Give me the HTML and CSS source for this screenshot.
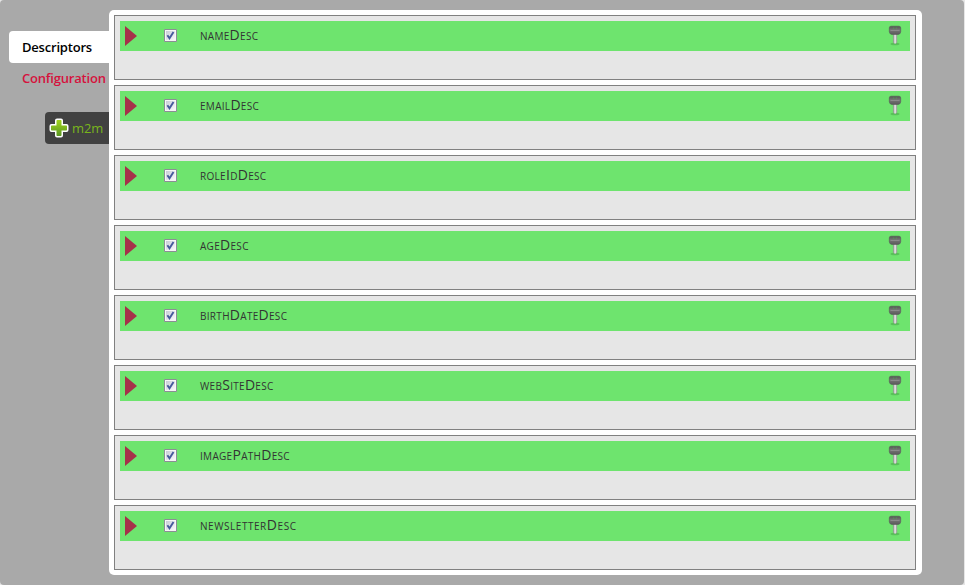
FILE: index.html
```html
<!DOCTYPE html>
<html lang="en">
<head>
<meta charset="utf-8">
<title>Descriptors</title>
<link rel="stylesheet" href="styles.css">
</head>
<body>
<svg class="defs" width="0" height="0" aria-hidden="true">
  <defs>
    <linearGradient id="plusFill" x1="0" y1="0" x2="0" y2="1"><stop offset="0" stop-color="#a2d51c"/><stop offset="1" stop-color="#5a9622"/></linearGradient>
    <linearGradient id="boxFill" x1="0" y1="0" x2="1" y2="1"><stop offset="0" stop-color="#c6ccd6"/><stop offset="1" stop-color="#fafafa"/></linearGradient>
    <linearGradient id="keyFill" x1="0" y1="0" x2="0" y2="1"><stop offset="0" stop-color="#555"/><stop offset=".45" stop-color="#757575"/><stop offset="1" stop-color="#5b5b5b"/></linearGradient>
    <linearGradient id="shaftFill"><stop offset="0" stop-color="#8b8b8b"/><stop offset=".5" stop-color="#eee"/><stop offset="1" stop-color="#999"/></linearGradient>
    <symbol id="check" viewBox="0 0 13 13"><path d="M.5.5h12v12H.5z" fill="#f6f6f6" stroke="#8b8f94"/><path d="M2 2h9v9H2z" fill="url(#boxFill)"/><path d="M3.4 6.3 5.5 9.3 9.5 3" fill="none" stroke="#455a9c" stroke-width="1.9"/></symbol>
    <symbol id="key" viewBox="0 0 14 22"><ellipse cx="7" cy="19" rx="4.5" ry="1.3" fill="#4ba94d" opacity=".6"/><path d="M5.3 8h3.6v9.5L7.1 19l-1.8-1.5z" fill="url(#shaftFill)" stroke="#969c96" stroke-width=".4"/><path d="M3 1.2h8q1.7 0 1.7 1.7v3.6Q12.7 9 10.4 9.4H3.6Q1.3 9 1.3 6.500V2.9Q1.300 1.200 3 1.200z" fill="url(#keyFill)" stroke="#555" stroke-width=".6"/><path d="M5 3.200h1.300M7.800 3.200h1.300" stroke="#559a56"/><path d="M2.500 5.500h9" stroke="#8a8a8a"/></symbol>
  </defs>
</svg>
<div class="app">
  <nav class="side">
    <a class="tab active"><span>Descriptors</span></a>
    <a class="tab"><span class="config">Configuration</span></a>
    <a class="add"><svg width="20" height="20" viewBox="0 0 20 20"><path d="M8 .5h4q2 0 2 2V6h3.500q2 0 2 2v4q0 2-2 2H14v3.500q0 2-2 2H8q-2 0-2-2V14H2.500q-2 0-2-2V8q0-2 2-2H6V2.500q0-2 2-2z" fill="#fff"/><path d="M8.200 2h3.600q.7 0 .7.700v4.800h4.800q.7 0 .7.700v3.600q0 .7-.7.700h-4.800v4.800q0 .7-.7.700H8.200q-.7 0-.7-.7v-4.800H2.700q-.7 0-.7-.7V8.200q0-.7.7-.7h4.800V2.700q0-.7.700-.7z" fill="url(#plusFill)"/></svg><span>m2m</span></a>
  </nav>
  <main class="panel">
    <section class="card"><div class="bar"><i class="arrow"></i><svg class="check"><use href="#check"/></svg><span class="name">nameDesc</span><svg class="key"><use href="#key"/></svg></div></section>
    <section class="card"><div class="bar"><i class="arrow"></i><svg class="check"><use href="#check"/></svg><span class="name">emailDesc</span><svg class="key"><use href="#key"/></svg></div></section>
    <section class="card"><div class="bar"><i class="arrow"></i><svg class="check"><use href="#check"/></svg><span class="name">roleIdDesc</span></div></section>
    <section class="card"><div class="bar"><i class="arrow"></i><svg class="check"><use href="#check"/></svg><span class="name">ageDesc</span><svg class="key"><use href="#key"/></svg></div></section>
    <section class="card"><div class="bar"><i class="arrow"></i><svg class="check"><use href="#check"/></svg><span class="name">birthDateDesc</span><svg class="key"><use href="#key"/></svg></div></section>
    <section class="card"><div class="bar"><i class="arrow"></i><svg class="check"><use href="#check"/></svg><span class="name">webSiteDesc</span><svg class="key"><use href="#key"/></svg></div></section>
    <section class="card"><div class="bar"><i class="arrow"></i><svg class="check"><use href="#check"/></svg><span class="name">imagePathDesc</span><svg class="key"><use href="#key"/></svg></div></section>
    <section class="card"><div class="bar"><i class="arrow"></i><svg class="check"><use href="#check"/></svg><span class="name long">newsletterDesc</span><svg class="key"><use href="#key"/></svg></div></section>
  </main>
</div>
</body>
</html>
```
FILE: styles.css
```css
* { box-sizing: border-box; }
body { margin: 0; background: #e6e6e6; font-family: "Trebuchet MS", "Open Sans", sans-serif; overflow: hidden; }
.defs { position: absolute; }
.app { display: flex; align-items: flex-start; width: 964px; height: 585px; padding-top: 10px; background: #a9a9a9; border-radius: 4px; }
.side { display: flex; flex-direction: column; width: 109px; padding: 21px 0 0 9px; }
.tab { display: flex; align-items: center; height: 32px; padding-left: 13px; font-size: 13px; font-weight: 600; letter-spacing: -.2px; white-space: nowrap; color: #d5123d; border-radius: 4px 0 0 4px; }
.tab.active { background: #fff; color: #000; }
.config { position: relative; top: -1px; }
.add { display: flex; align-items: center; width: 64px; height: 32px; margin: 17px 0 0 36px; padding-left: 4px; gap: 3px; border-radius: 4px 0 0 4px; background: #414141; color: #79b51c; font-size: 13px; font-weight: 500; letter-spacing: -.1px; }
.panel { display: flex; flex-direction: column; gap: 5px; width: 813px; height: 565px; padding: 5px 6px 5px 5px; background: #fff; border-radius: 5px; }
.card { height: 65px; padding: 5px; background: #e6e6e6; border: 1px solid #808080; }
.bar { display: flex; align-items: center; height: 30px; padding: 0 8px 0 5px; background: #6ee46e; }
.arrow { width: 12px; height: 20px; background: #a6314a; clip-path: polygon(0 0, 100% 50%, 0 100%); }
.check { width: 13px; height: 13px; margin: 0 23px 1px 27px; }
.name { font-size: 14px; font-weight: 500; line-height: 28px; height: 30px; font-variant: small-caps; letter-spacing: .3px; color: #333; }
.name.long { letter-spacing: .55px; }
.key { width: 14px; height: 22px; margin-left: auto; }
```
